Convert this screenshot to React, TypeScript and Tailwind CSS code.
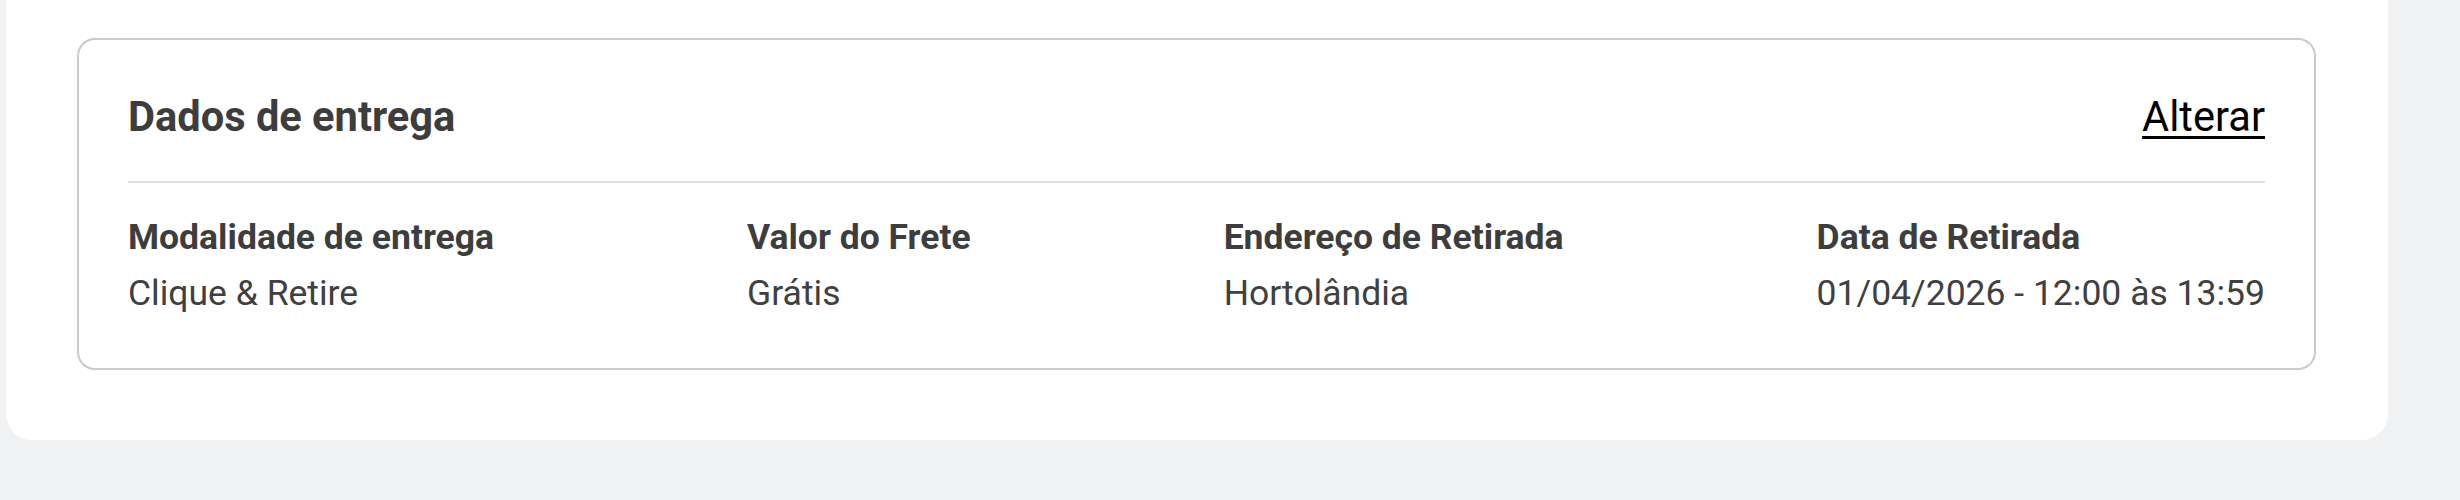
import type { FC } from "react";

type Field = { label: string; value: string };

const fields: Field[] = [
	{ label: "Modalidade de entrega", value: "Clique & Retire" },
	{ label: "Valor do Frete", value: "Grátis" },
	{ label: "Endereço de Retirada", value: "Hortolândia" },
	{ label: "Data de Retirada", value: "01/04/2026 - 12:00 às 13:59" },
];

const DeliveryField: FC<Field> = ({ label, value }) => (
	<div className="flex flex-col gap-[14px]">
		<div className="text-[35.5px] leading-[42px] font-bold text-[#3d3d3d]">{label}</div>
		<div className="text-[35.5px] leading-[42px] font-normal text-[#404040]">{value}</div>
	</div>
);

const DeliveryCard: FC = () => (
	<div className="rounded-[18px] border-2 border-[#cacaca] bg-white px-[49px] pt-[52px] pb-[54px]">
		<div className="flex items-center justify-between pb-[40px]">
			<h2 className="text-[41.6px] leading-[49px] font-bold text-[#3d3d3d]">Dados de entrega</h2>
			<button
				type="button"
				className="text-[41.6px] leading-[49px] text-black underline decoration-[3px] underline-offset-[5px]"
			>
				Alterar
			</button>
		</div>
		<div className="h-[2px] w-full bg-[#e0e0e0]" />
		<div className="mt-[33px] flex justify-between">
			{fields.map((f) => (
				<DeliveryField key={f.label} label={f.label} value={f.value} />
			))}
		</div>
	</div>
);

export default function App() {
	return (
		<div className="min-h-[500px] w-[2460px] bg-[#f1f2f3] font-['Roboto','Liberation_Sans',sans-serif]">
			<div className="ml-[6px] w-[2382px] rounded-b-[26px] bg-white pt-[38px] pb-[70px] pl-[71px] pr-[72px]">
				<DeliveryCard />
			</div>
		</div>
	);
}
